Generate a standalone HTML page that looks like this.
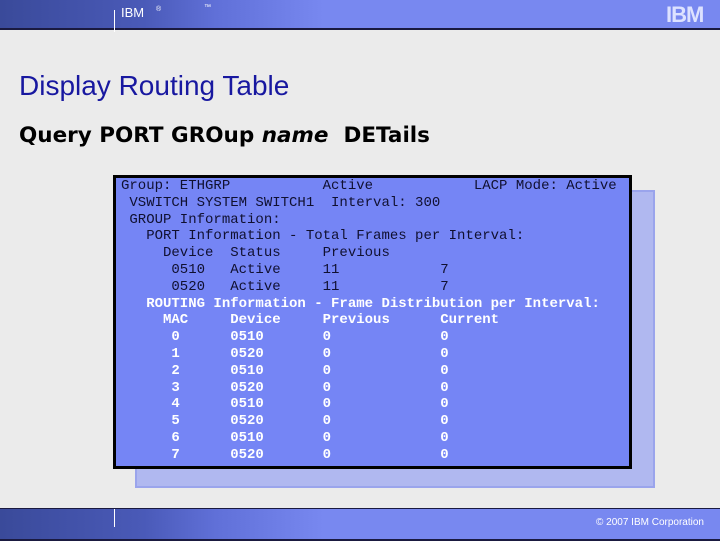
<!DOCTYPE html>
<html><head><style>
body{margin:0;width:720px;height:540px;background:#ebebeb;position:relative;overflow:hidden;font-family:"Liberation Sans",sans-serif}
.hdr{position:absolute;left:0;top:0;width:720px;height:28px;background:linear-gradient(90deg,#3a4a9a 0%,#4a5ab8 20%,#6070d8 30%,#7888f0 45%,#7888f0 100%);border-bottom:2px solid #1a1a40}
.ftr{position:absolute;left:0;top:508px;width:720px;height:30px;background:linear-gradient(90deg,#3a4a9a 0%,#4a5ab8 20%,#6070d8 30%,#7888f0 45%,#7888f0 100%);border-top:1px solid #1a1a40;border-bottom:2px solid #1a1a40}
.t{position:absolute;color:#1818a0;font-size:28px;left:19px;top:70px}
.s{position:absolute;font-family:"DejaVu Sans",sans-serif;font-weight:bold;font-size:21.5px;left:19px;top:123px;color:#000}
.shadow{position:absolute;left:135px;top:190px;width:516px;height:294px;background:#b0b8f0;border:2px solid #9aa4ec}
.box{position:absolute;left:113px;top:175px;width:513px;height:288px;background:#7585f5;border:3px solid #000}
pre{position:absolute;left:121px;top:178px;margin:0;font-family:"Liberation Mono",monospace;font-size:14px;line-height:16.8px;color:#101030}
.w{color:#fff;font-weight:bold}
</style></head><body>
<div class="hdr"><span style="position:absolute;left:121px;top:5px;color:#fff;font-size:13px">IBM</span><span style="position:absolute;left:156px;top:6px;color:#fff;font-size:7px">®</span><span style="position:absolute;left:204px;top:4px;color:#fff;font-size:7px">™</span><div style="position:absolute;left:114px;top:10px;width:1px;height:22px;background:#fff"></div><span style="position:absolute;left:666px;top:2px;color:#dde2ff;font-weight:bold;font-size:22px;letter-spacing:-1px">IBM</span></div>
<div class="t">Display Routing Table</div>
<div class="s">Query PORT GROup <i>name</i>&nbsp; DETails</div>
<div class="shadow"></div>
<div class="box"></div>
<pre>Group: ETHGRP           Active            LACP Mode: Active
 VSWITCH SYSTEM SWITCH1  Interval: 300
 GROUP Information:
   PORT Information - Total Frames per Interval:
     Device  Status     Previous
      0510   Active     11            7
      0520   Active     11            7
<span class="w">   ROUTING Information - Frame Distribution per Interval:
     MAC     Device     Previous      Current
      0      0510       0             0
      1      0520       0             0
      2      0510       0             0
      3      0520       0             0
      4      0510       0             0
      5      0520       0             0
      6      0510       0             0
      7      0520       0             0</span></pre>
<div class="ftr"><div style="position:absolute;left:114px;top:0;width:1px;height:18px;background:#fff"></div><span style="position:absolute;left:596px;top:8px;color:#fff;font-size:10px">© 2007 IBM Corporation</span></div>
</body></html>
